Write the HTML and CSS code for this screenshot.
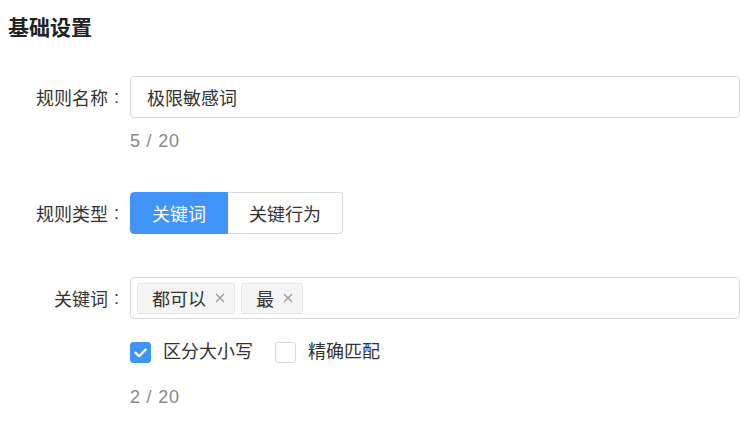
FILE: index.html
```html
<!DOCTYPE html>
<html lang="zh-CN">
<head>
<meta charset="utf-8">
<link rel="stylesheet" href="styles.css">
</head>
<body>
<div class="page">
  <h2 class="title">基础设置</h2>

  <div class="row row-name">
    <div class="label">规则名称<span class="colon">:</span></div>
    <div class="control">
      <div class="input">极限敏感词</div>
      <div class="count">5 / 20</div>
    </div>
  </div>

  <div class="row row-type">
    <div class="label">规则类型<span class="colon">:</span></div>
    <div class="control">
      <div class="seg">
        <span class="seg-btn active">关键词</span>
        <span class="seg-btn">关键行为</span>
      </div>
    </div>
  </div>

  <div class="row row-kw">
    <div class="label">关键词<span class="colon">:</span></div>
    <div class="control">
      <div class="tag-input">
        <span class="tag">都可以<svg class="x" viewBox="0 0 10 10"><path d="M1 1L9 9M9 1L1 9"/></svg></span>
        <span class="tag">最<svg class="x" viewBox="0 0 10 10"><path d="M1 1L9 9M9 1L1 9"/></svg></span>
      </div>
      <div class="checks">
        <label class="check"><span class="box checked"><svg viewBox="0 0 20 20"><path d="M4.6 10.2l3.9 3.8 7-7.2"/></svg></span>区分大小写</label>
        <label class="check"><span class="box"></span>精确匹配</label>
      </div>
      <div class="count count2">2 / 20</div>
    </div>
  </div>
</div>
</body>
</html>
```

FILE: styles.css
```css
* { box-sizing: border-box; }
html, body { margin: 0; padding: 0; background: #fff; }
body {
  font-family: "Liberation Sans", "Noto Sans CJK SC", sans-serif;
  color: #333;
  font-size: 18px;
}
.page { padding: 14px 0 0 8px; width: 740px; }
.title {
  margin: 0;
  font-size: 21px;
  line-height: 28px;
  font-weight: 700;
  color: #222;
}
.row { display: flex; align-items: flex-start; }
.row-name { margin-top: 34px; }
.row-type { margin-top: 39px; }
.row-kw { margin-top: 43px; }
.label {
  width: 122px;
  height: 42px;
  display: flex;
  align-items: center;
  justify-content: flex-end;
  color: #333;
  white-space: nowrap;
}
.colon { margin: 0 11px 0 6px; }
.control { flex: 1; }
.input {
  height: 42px;
  border: 1px solid #d9d9d9;
  border-radius: 4px;
  padding: 0 16px;
  display: flex;
  align-items: center;
  color: #333;
}
.count {
  margin-top: 11px;
  line-height: 24px;
  color: #888;
  letter-spacing: 0.8px;
}
.seg { display: inline-flex; height: 42px; }
.seg-btn {
  display: flex;
  align-items: center;
  padding: 0 21px;
  border: 1px solid #d9d9d9;
  color: #333;
  background: #fff;
}
.seg-btn:first-child { border-radius: 4px 0 0 4px; }
.seg-btn:last-child { border-radius: 0 4px 4px 0; border-left: none; }
.seg-btn.active { background: #4093f7; border-color: #4093f7; color: #fff; }
.tag-input {
  height: 42px;
  border: 1px solid #d9d9d9;
  border-radius: 4px;
  padding: 0 6px;
  display: flex;
  align-items: center;
  gap: 6px;
}
.tag {
  height: 31px;
  display: inline-flex;
  align-items: center;
  padding: 0 9px 0 14px;
  background: #f5f5f5;
  border: 1px solid #e6e6e6;
  border-radius: 2px;
  color: #333;
}
.x { width: 10px; height: 10px; margin-left: 9px; }
.x path { stroke: #999; stroke-width: 1.2; fill: none; }
.checks { display: flex; margin-top: 21px; gap: 22px; }
.check { display: flex; align-items: center; line-height: 24px; color: #333; }
.box {
  width: 21px;
  height: 21px;
  border: 1px solid #d9d9d9;
  border-radius: 3px;
  margin-right: 12px;
  background: #fff;
  display: flex;
}
.box.checked { background: #4093f7; border-color: #4093f7; }
.box svg { width: 100%; height: 100%; }
.box svg path { stroke: #fff; stroke-width: 2.4; fill: none; stroke-linecap: round; stroke-linejoin: round; }
.count2 { margin-top: 21px; }
```
